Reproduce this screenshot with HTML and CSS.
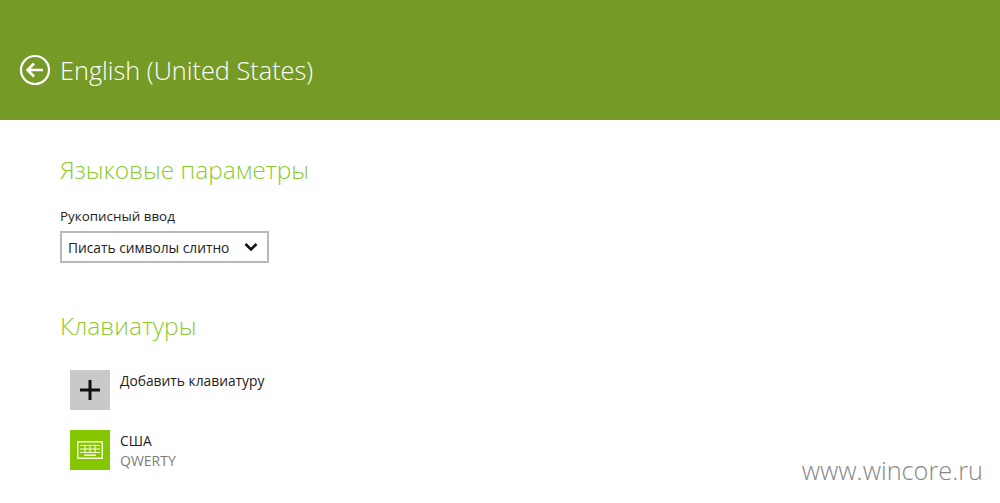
FILE: index.html
```html
<!DOCTYPE html>
<html lang="en">
<head>
    <meta charset="UTF-8">
    <title>English (United States)</title>
    <link rel="stylesheet" href="styles.css">
</head>
<body>

    <div class="header">
        <svg class="back-icon" width="32" height="32" viewBox="0 0 32 32">
            <circle cx="16" cy="16" r="14" fill="none" stroke="#fff" stroke-width="2.2"/>
            <path d="M8.5 16H24M15 9.5L8.5 16l6.5 6.5" fill="none" stroke="#fff" stroke-width="2.6"/>
        </svg>
        <div class="title">English (United States)</div>
    </div>

    <div class="content">
        <div class="section-title">Языковые параметры</div>
        <div class="field-label">Рукописный ввод</div>
        <div class="select-box">
            <span>Писать символы слитно</span>
            <svg width="14" height="10" viewBox="0 0 14 10">
                <path d="M1.5 2L7 7.5 12.5 2" fill="none" stroke="#111" stroke-width="2.6"/>
            </svg>
        </div>

        <div class="section-title keyboards-title">Клавиатуры</div>

        <div class="list-item">
            <div class="tile tile-add">
                <svg width="20" height="20" viewBox="0 0 20 20">
                    <path d="M10 0V20M0 10H20" stroke="#111" stroke-width="3"/>
                </svg>
            </div>
            <div class="item-name">Добавить клавиатуру</div>
        </div>

        <div class="list-item">
            <div class="tile tile-keyboard">
                <svg width="26" height="18" viewBox="0 0 26 18">
                    <rect x="0.75" y="0.75" width="24.5" height="16.5" fill="none" stroke="#f3fbd8" stroke-width="1.5"/>
                    <path d="M3 4.5H23M3 8H23M3 11.5H23M8 3.5V11.5M13 3.5V11.5M18 3.5V11.5" stroke="#f3fbd8" stroke-width="1.1"/>
                    <path d="M7 14.2H19" stroke="#f3fbd8" stroke-width="1.6"/>
                </svg>
            </div>
            <div class="item-text">
                <div class="item-name">США</div>
                <div class="item-sub">QWERTY</div>
            </div>
        </div>
    </div>

    <div class="watermark">www.wincore.ru</div>

</body>
</html>
```

FILE: styles.css
```css
html, body {
    margin: 0;
    padding: 0;
    height: 100%;
    background: #fff;
    overflow: hidden;
    font-family: "Open Sans", sans-serif;
}

/* Top green bar */
.header {
    height: 120px;
    box-sizing: border-box;
    padding: 54px 0 0 19px;
    background: #759b26;
    display: flex;
    align-items: flex-start;
    gap: 9px;
}

.title {
    margin-top: -1px;
    color: #fff;
    font-size: 25.3px;
    font-weight: 300;
    line-height: 34px;
}

.content {
    padding: 33px 0 0 60px;
}

.section-title {
    color: #8dca2c;
    font-size: 24.5px;
    font-weight: 300;
    line-height: 34px;
}

.keyboards-title {
    margin-top: 46px;
}

.field-label {
    margin-top: 20px;
    color: #222;
    font-size: 13.4px;
    line-height: 18px;
}

/* Dropdown */
.select-box {
    width: 209px;
    height: 32px;
    margin-top: 6px;
    box-sizing: border-box;
    padding: 0 9px 0 6px;
    border: 2px solid #b9b9b9;
    display: flex;
    align-items: center;
    justify-content: space-between;
    color: #222;
    font-size: 13.75px;
}

/* Keyboard list */
.list-item {
    display: flex;
    align-items: flex-start;
    gap: 10px;
    margin: 0 0 20px 10px;
}

.keyboards-title + .list-item {
    margin-top: 27px;
}

.tile {
    width: 40px;
    height: 40px;
    display: flex;
    align-items: center;
    justify-content: center;
}

.tile-add {
    background: #c9c9c9;
}

.tile-keyboard {
    background: #84c700;
}

.item-name {
    padding-top: 1px;
    color: #222;
    font-size: 13.8px;
    line-height: 20px;
}

.item-sub {
    color: #7d7d7d;
    font-size: 14px;
    line-height: 20px;
}

.watermark {
    position: absolute;
    right: 17px;
    top: 453px;
    color: #888;
    font-size: 25.3px;
    font-weight: 300;
    line-height: 34px;
}
```
